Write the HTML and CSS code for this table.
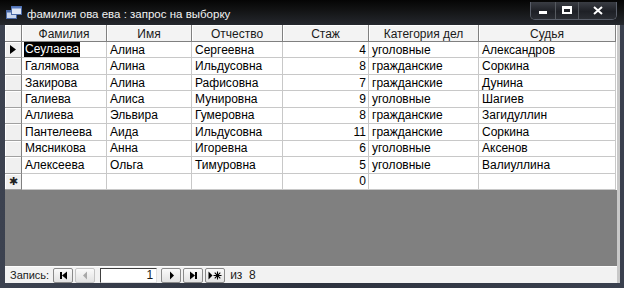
FILE: index.html
```html
<!DOCTYPE html>
<html lang="ru">
<head>
<meta charset="utf-8">
<title>фамилия ова ева : запрос на выборку</title>
<link rel="stylesheet" href="styles.css">
</head>
<body>
<div class="window">
  <div class="titlebar">
    <svg class="appicon" width="16" height="14" viewBox="0 0 16 14">
      <rect x="0.5" y="4.5" width="10" height="8" fill="#c9d6ee" stroke="#4a6aa8"/>
      <rect x="0.5" y="4.5" width="10" height="2" fill="#4a6aa8"/>
      <rect x="5.5" y="0.5" width="10" height="8" fill="#dfe7f6" stroke="#4a6aa8"/>
      <rect x="5.5" y="0.5" width="10" height="2" fill="#5a7cc0"/>
    </svg>
    <span class="title">фамилия ова ева : запрос на выборку</span>
    <div class="wbtns">
      <div class="wbtn min"><span class="minbar"></span></div>
      <div class="wbtn max"><span class="maxbox"></span></div>
      <div class="wbtn close">
        <svg width="10" height="9" viewBox="0 0 10 9"><path d="M1 1 L9 8 M9 1 L1 8" stroke="#fff" stroke-width="2"/></svg>
      </div>
    </div>
  </div>
  <div class="client">
    <div class="sheet">
      <div class="grid">
        <div class="hd sel"></div>
        <div class="hd">Фамилия</div>
        <div class="hd">Имя</div>
        <div class="hd">Отчество</div>
        <div class="hd">Стаж</div>
        <div class="hd">Категория дел</div>
        <div class="hd">Судья</div>

        <div class="rs"><svg width="6" height="9" viewBox="0 0 6 9"><path d="M0 0 L6 4.5 L0 9Z" fill="#000"/></svg></div>
        <div class="c"><span class="hl">Сеулаева</span></div><div class="c">Алина</div><div class="c">Сергеевна</div><div class="c n">4</div><div class="c">уголовные</div><div class="c">Александров</div>

        <div class="rs"></div>
        <div class="c">Галямова</div><div class="c">Алина</div><div class="c">Ильдусовна</div><div class="c n">8</div><div class="c">гражданские</div><div class="c">Соркина</div>

        <div class="rs"></div>
        <div class="c">Закирова</div><div class="c">Алина</div><div class="c">Рафисовна</div><div class="c n">7</div><div class="c">гражданские</div><div class="c">Дунина</div>

        <div class="rs"></div>
        <div class="c">Галиева</div><div class="c">Алиса</div><div class="c">Мунировна</div><div class="c n">9</div><div class="c">уголовные</div><div class="c">Шагиев</div>

        <div class="rs"></div>
        <div class="c">Аллиева</div><div class="c">Эльвира</div><div class="c">Гумеровна</div><div class="c n">8</div><div class="c">гражданские</div><div class="c">Загидуллин</div>

        <div class="rs"></div>
        <div class="c">Пантелеева</div><div class="c">Аида</div><div class="c">Ильдусовна</div><div class="c n">11</div><div class="c">гражданские</div><div class="c">Соркина</div>

        <div class="rs"></div>
        <div class="c">Мясникова</div><div class="c">Анна</div><div class="c">Игоревна</div><div class="c n">6</div><div class="c">уголовные</div><div class="c">Аксенов</div>

        <div class="rs"></div>
        <div class="c">Алексеева</div><div class="c">Ольга</div><div class="c">Тимуровна</div><div class="c n">5</div><div class="c">уголовные</div><div class="c">Валиуллина</div>

        <div class="rs"><span class="star">&#10033;</span></div>
        <div class="c"></div><div class="c"></div><div class="c"></div><div class="c n">0</div><div class="c"></div><div class="c"></div>
      </div>
      <div class="fill"></div>
    </div>
    <div class="status">
      <span class="lbl">Запись:</span>
      <div class="nb"><svg width="9" height="9" viewBox="0 0 9 9"><rect x="1" y="1" width="2" height="7"/><path d="M8 0.5 L3 4.5 L8 8.5Z"/></svg></div>
      <div class="nb dis"><svg width="9" height="9" viewBox="0 0 9 9"><path d="M6 0.5 L2 4.5 L6 8.5Z" fill="#a8a8a8"/></svg></div>
      <div class="rec">1</div>
      <div class="nb"><svg width="9" height="9" viewBox="0 0 9 9"><path d="M3 0.5 L7 4.5 L3 8.5Z"/></svg></div>
      <div class="nb"><svg width="9" height="9" viewBox="0 0 9 9"><path d="M1 0.5 L6 4.5 L1 8.5Z"/><rect x="6" y="1" width="2" height="7"/></svg></div>
      <div class="nb"><svg width="14" height="9" viewBox="0 0 14 9"><path d="M0.5 0.5 L4.5 4.5 L0.5 8.5Z"/><path d="M9.5 0.5 V8.5 M5.5 4.5 H13.5 M6.7 1.7 L12.3 7.3 M12.3 1.7 L6.7 7.3" stroke="#000" stroke-width="1.1"/></svg></div>
      <span class="of">из&nbsp; 8</span>
    </div>
  </div>
</div>
</body>
</html>
```

FILE: styles.css
```css
* { box-sizing: border-box; }
html, body { margin: 0; padding: 0; }
body {
  width: 624px;
  height: 288px;
  overflow: hidden;
  background: #2c313d;
  font-family: "Liberation Sans", Arial, sans-serif;
}
.window {
  width: 624px;
  height: 288px;
  display: flex;
  flex-direction: column;
  background: linear-gradient(to right, #3c4250, #2d323e 50%, #3a404e);
  padding: 0 4px 5px 5px;
}
.titlebar {
  height: 25px;
  margin: 0 -4px 0 -5px;
  padding: 0 6px 0 6px;
  display: flex;
  align-items: center;
  background: linear-gradient(to bottom, #050505 0%, #121314 40%, #25282e 100%);
}
.appicon { flex: none; margin-right: 5px; margin-top: 1px; }
.title {
  color: #f2f2f2;
  font-size: 11.5px;
  flex: 1;
  margin-top: 2px;
}
.wbtns {
  display: flex;
  margin-right: 1px;
  margin-top: -4px;
  border: 1px solid #5a5f6a;
  border-top: none;
  border-radius: 0 0 5px 5px;
  overflow: hidden;
}
.wbtn {
  height: 17px;
  display: flex;
  align-items: center;
  justify-content: center;
  background: linear-gradient(to bottom, #3a3d44, #1e2026 55%, #2a2d33);
  border-left: 1px solid #55595f;
}
.wbtn:first-child { border-left: none; }
.min { width: 24px; }
.max { width: 23px; }
.close { width: 38px; }
.minbar { width: 8px; height: 3px; background: #fff; margin-top: 5px; }
.maxbox { width: 10px; height: 8px; border: 2px solid #fff; border-top-width: 3px; }
.client {
  flex: 1;
  display: flex;
  flex-direction: column;
  background: #808080;
  border-right: 3px solid #c8c8c8;
}
.sheet {
  flex: 1;
  display: flex;
  flex-direction: column;
  background: #808080;
}
.grid {
  display: grid;
  grid-template-columns: 17px 85px 85px 91px 86px 110px 137px;
  grid-template-rows: 17px repeat(9, 16.45px);
  background: #fff;
  font-size: 12px;
  color: #000;
}
.hd {
  background: #f3f3f3;
  border-right: 1px solid #808080;
  border-bottom: 1px solid #808080;
  box-shadow: inset 1px 1px 0 #fff;
  display: flex;
  align-items: center;
  justify-content: center;
  color: #1a1a1a;
  padding-top: 1px;
}
.rs {
  background: #f0f0f0;
  border-right: 1px solid #808080;
  border-bottom: 1px solid #a0a0a0;
  box-shadow: inset 1px 1px 0 #fff;
  display: flex;
  align-items: center;
  justify-content: center;
}
.star { font-size: 11px; color: #222; line-height: 1; }
.c {
  border-right: 1px solid #c8c8c8;
  border-bottom: 1px solid #c8c8c8;
  padding: 0 3px;
  display: flex;
  align-items: center;
  white-space: nowrap;
  overflow: hidden;
}
.c.n { justify-content: flex-end; padding-right: 2px; }
.hl {
  background: #000;
  color: #fff;
  margin-left: -1px;
  padding: 0 1px;
  line-height: 15px;
}
.fill { flex: 1; background: #808080; }
.status {
  height: 17px;
  background: #f2f2f2;
  border-top: 1px solid #fdfdfd;
  display: flex;
  align-items: center;
  font-size: 11px;
  color: #1a1a1a;
  padding-left: 5px;
}
.lbl { margin-right: 4px; }
.nb {
  width: 20px;
  height: 15px;
  border: 1px solid #8a8a8a;
  border-radius: 2px;
  background: linear-gradient(#fafafa, #e2e2e2);
  display: flex;
  align-items: center;
  justify-content: center;
  margin-right: 2px;
}
.nb svg { fill: #000; }
.nb.dis { border-color: #c4c4c4; margin-right: 5px; }
.rec {
  width: 57px;
  height: 15px;
  background: #fff;
  border-top: 1px solid #404040;
  border-left: 1px solid #404040;
  border-right: 1px solid #e0e0e0;
  border-bottom: 1px solid #e0e0e0;
  text-align: right;
  padding-right: 3px;
  line-height: 13px;
  margin-right: 4px;
  font-size: 12px;
}
.of { margin-left: 3px; font-size: 12px; }
```
